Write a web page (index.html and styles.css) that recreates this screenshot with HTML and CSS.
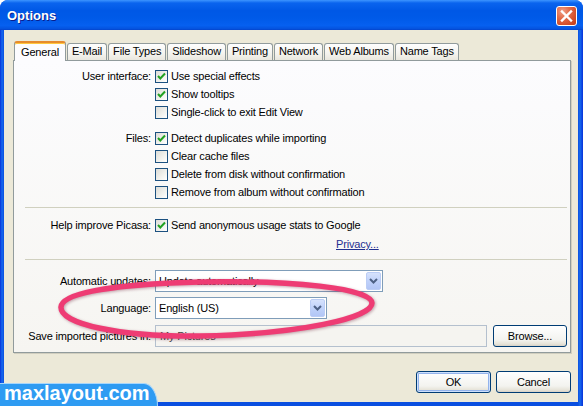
FILE: index.html
```html
<!DOCTYPE html>
<html>
<head>
<meta charset="utf-8">
<link rel="stylesheet" href="styles.css">
</head>
<body>
<div class="window">
  <div class="titlebar">
    <span class="title">Options</span>
    <span class="close"><svg width="19" height="18" viewBox="0 0 19 18"><path d="M5 4.5 L14 13.5 M14 4.5 L5 13.5" stroke="#fff" stroke-width="2.4" stroke-linecap="square" fill="none"/></svg></span>
  </div>
  <div class="client">
    <div class="tabs">
      <div class="tab active">General</div>
      <div class="tab">E-Mail</div>
      <div class="tab">File Types</div>
      <div class="tab">Slideshow</div>
      <div class="tab">Printing</div>
      <div class="tab">Network</div>
      <div class="tab">Web Albums</div>
      <div class="tab">Name Tags</div>
    </div>
    <div class="panel">
      <div class="row">
        <div class="lbl">User interface:</div>
        <div class="opts">
          <div class="cb"><span class="box on"><svg width="11" height="11" viewBox="0 0 11 11"><path d="M2 5 L4.3 7.5 L9 2.5" stroke="#21A121" stroke-width="2" fill="none"/></svg></span>Use special effects</div>
          <div class="cb"><span class="box on"><svg width="11" height="11" viewBox="0 0 11 11"><path d="M2 5 L4.3 7.5 L9 2.5" stroke="#21A121" stroke-width="2" fill="none"/></svg></span>Show tooltips</div>
          <div class="cb"><span class="box"></span>Single-click to exit Edit View</div>
        </div>
      </div>
      <div class="row group">
        <div class="lbl">Files:</div>
        <div class="opts">
          <div class="cb"><span class="box on"><svg width="11" height="11" viewBox="0 0 11 11"><path d="M2 5 L4.3 7.5 L9 2.5" stroke="#21A121" stroke-width="2" fill="none"/></svg></span>Detect duplicates while importing</div>
          <div class="cb"><span class="box"></span>Clear cache files</div>
          <div class="cb"><span class="box"></span>Delete from disk without confirmation</div>
          <div class="cb"><span class="box"></span>Remove from album without confirmation</div>
        </div>
      </div>
      <div class="sep"></div>
      <div class="row help">
        <div class="lbl">Help improve Picasa:</div>
        <div class="opts">
          <div class="cb"><span class="box on"><svg width="11" height="11" viewBox="0 0 11 11"><path d="M2 5 L4.3 7.5 L9 2.5" stroke="#21A121" stroke-width="2" fill="none"/></svg></span>Send anonymous usage stats to Google</div>
        </div>
      </div>
      <div class="privacy-row"><span class="link">Privacy...</span></div>
      <div class="sep sep2"></div>
      <div class="row frow first">
        <div class="lbl">Automatic updates:</div>
        <div class="combo wide"><span>Update automatically</span><span class="drop"><svg width="9" height="6" viewBox="0 0 9 6"><path d="M1 1 L4.5 4.5 L8 1" stroke="#4D6185" stroke-width="2" fill="none"/></svg></span></div>
      </div>
      <div class="row frow">
        <div class="lbl">Language:</div>
        <div class="combo narrow"><span>English (US)</span><span class="drop"><svg width="9" height="6" viewBox="0 0 9 6"><path d="M1 1 L4.5 4.5 L8 1" stroke="#4D6185" stroke-width="2" fill="none"/></svg></span></div>
      </div>
      <div class="row frow last">
        <div class="lbl">Save imported pictures in:</div>
        <div class="field">My Pictures</div>
        <div class="btn browse">Browse...</div>
      </div>
    </div>
    <div class="buttons">
      <div class="btn default">OK</div>
      <div class="btn">Cancel</div>
    </div>
  </div>
  <div class="watermark">maxlayout.com</div>
  <svg class="oval" width="583" height="406" viewBox="0 0 583 406">
    <path d="M61 307 C62 292 120 284 200 282 C290 280 372 288 372 303 C372 318 300 334 200 336 C120 337 60 324 61 307 Z" fill="none" stroke="#EE3C74" stroke-width="5.5"/>
  </svg>
</div>
</body>
</html>
```
FILE: styles.css
```css
html, body {
  margin: 0;
  padding: 0;
}
body {
  width: 583px;
  height: 406px;
  overflow: hidden;
  font-family: "Liberation Sans", Arial, sans-serif;
  font-size: 11px;
  letter-spacing: -0.17px;
  color: #000;
  background: #fff;
}
.window {
  position: relative;
  width: 583px;
  height: 406px;
  background: linear-gradient(90deg, #0831D9 0, #166AEE 2px, #0A4FE0 4px, #0A4FE0 578px, #166AEE 580px, #0831D9 583px);
  border-radius: 8px 8px 0 0;
  display: flex;
  flex-direction: column;
  box-sizing: border-box;
}
.titlebar {
  height: 30px;
  flex: none;
  border-radius: 8px 8px 0 0;
  background: linear-gradient(180deg, #3D95FF 0%, #0A64EE 10%, #0058E6 35%, #005AE8 60%, #0660F0 85%, #0554E0 95%, #0444CC 100%);
  display: flex;
  align-items: center;
  justify-content: space-between;
  padding: 0 6px 0 7px;
}
.title {
  color: #fff;
  font-weight: bold;
  font-size: 13px;
  letter-spacing: 0;
  text-shadow: 1px 1px 0 #0A1E8C;
  margin-top: 1px;
}
.close {
  width: 21px;
  height: 20px;
  box-sizing: border-box;
  border: 1px solid #fff;
  border-radius: 3px;
  background: radial-gradient(circle at 30% 25%, #F0A088 0%, #E36E4C 35%, #D44F2A 70%, #C03A18 100%);
  display: flex;
  align-items: center;
  justify-content: center;
  margin-top: 1px;
}
.close svg { display: block; }
.client {
  flex: 1;
  margin: 0 5px 4px 4px;
  background: #ECE9D8;
  padding: 11px 7px 0 9px;
  display: flex;
  flex-direction: column;
}
.tabs {
  display: flex;
  align-items: flex-end;
  height: 19px;
  gap: 1px;
}
.tab {
  height: 16px;
  line-height: 15px;
  padding: 0 4px;
  border: 1px solid #919B9C;
  border-bottom: none;
  border-radius: 3px 3px 0 0;
  background: linear-gradient(#FEFEFE, #F4F3EE 60%, #E9E7DE);
  white-space: nowrap;
}
.tab.active {
  height: 18px;
  line-height: 18px;
  margin-bottom: -1px;
  margin-left: 1px;
  margin-right: 0;
  padding: 0 6px;
  border-top: 2px solid #E68B2C;
  box-shadow: inset 0 1px 0 #FFC73C;
  background: #FCFCFE;
  position: relative;
  z-index: 1;
}
.panel {
  height: 293px;
  box-sizing: border-box;
  border: 1px solid #919B9C;
  background: linear-gradient(#FCFCFE, #F6F5F1);
  padding-top: 6px;
  box-shadow: 1px 1px 0 #D0CEBF;
}
.row {
  display: flex;
}
.lbl {
  width: 137px;
  flex: none;
  text-align: right;
  line-height: 18px;
  white-space: nowrap;
}
.opts {
  margin-left: 4px;
  display: flex;
  flex-direction: column;
}
.cb {
  height: 18px;
  display: flex;
  align-items: center;
  white-space: nowrap;
}
.box {
  width: 13px;
  height: 13px;
  box-sizing: border-box;
  border: 1px solid #1C5180;
  background: linear-gradient(135deg, #DCDCD7 0%, #F2F2EE 60%, #FFFFFF 100%);
  margin-right: 3px;
  display: flex;
  align-items: center;
  justify-content: center;
}
.box svg { display: block; }
.group { margin-top: 8px; }
.sep {
  height: 1px;
  background: #D0D0BF;
  margin: 6px 3px 0 11px;
}
.help { margin-top: 8px; }
.privacy-row {
  height: 18px;
  line-height: 18px;
  margin-top: 1px;
  padding-left: 322px;
}
.link {
  color: #1F2F90;
  text-decoration: underline;
}
.sep2 { margin-top: 6px; }
.frow { margin-top: 5px; align-items: center; }
.frow.first { margin-top: 10px; }
.frow.last { margin-top: 6px; }
.frow .lbl { line-height: 22px; }
.combo {
  margin-left: 4px;
  height: 22px;
  box-sizing: border-box;
  border: 1px solid #7F9DB9;
  background: #fff;
  display: flex;
  align-items: center;
  justify-content: space-between;
  padding: 0 1px 0 3px;
}
.combo.wide { width: 228px; }
.combo.narrow { width: 172px; }
.drop {
  width: 15px;
  height: 18px;
  box-sizing: border-box;
  border: 1px solid #BBCDF5;
  border-radius: 2px;
  background: linear-gradient(#D6E2FC, #C0D2FA 50%, #B2C6F6);
  display: flex;
  align-items: center;
  justify-content: center;
}
.drop svg { display: block; }
.field {
  margin-left: 4px;
  width: 332px;
  height: 22px;
  box-sizing: border-box;
  border: 1px solid #B4C0CE;
  background: #F5F4F0;
  color: #444;
  line-height: 20px;
  padding-left: 4px;
}
.btn {
  width: 75px;
  height: 22px;
  box-sizing: border-box;
  border: 1px solid #003C74;
  border-radius: 3px;
  background: linear-gradient(#FFFFFF, #F3F3EF 70%, #E6E3D8 90%, #D6D0C5);
  text-align: center;
  line-height: 20px;
}
.browse {
  margin-left: 6px;
  width: 74px;
}
.btn.default {
  box-shadow: inset 0 0 0 1px #CEE0FC, inset 0 0 0 2px #93B3EC;
}
.buttons {
  display: flex;
  justify-content: flex-end;
  gap: 5px;
  margin-top: 18px;
}
.watermark {
  position: absolute;
  left: 0;
  bottom: 0;
  width: 158px;
  height: 23px;
  box-sizing: border-box;
  border-top: 1px solid #A8D6FB;
  border-right: 1px solid #A8D6FB;
  border-top-right-radius: 14px 23px;
  background: #2E9BF2;
  color: #fff;
  font-weight: bold;
  font-size: 20px;
  letter-spacing: 0;
  line-height: 19px;
  padding-left: 4px;
  white-space: nowrap;
}
.oval {
  position: absolute;
  left: 0;
  top: 0;
  pointer-events: none;
  filter: drop-shadow(1px 1px 1.5px rgba(90, 0, 30, 0.35));
}
```
